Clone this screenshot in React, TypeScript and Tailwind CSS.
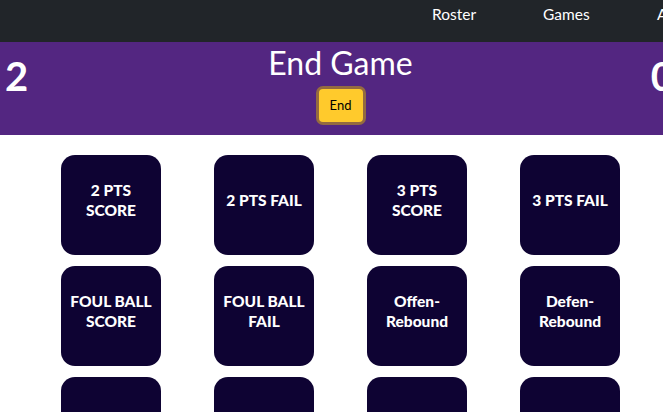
const actions = [
  ["2 PTS", "SCORE"],
  ["2 PTS FAIL"],
  ["3 PTS", "SCORE"],
  ["3 PTS FAIL"],
  ["FOUL BALL", "SCORE"],
  ["FOUL BALL", "FAIL"],
  ["Offen-", "Rebound"],
  ["Defen-", "Rebound"],
  [""],
  [""],
  [""],
  [""],
];

export default function App() {
  return (
    <div
      className="w-[663px] h-[412px] overflow-hidden bg-white"
      style={{ fontFamily: "Lato, 'Noto Sans', sans-serif" }}
    >
      <div className="w-[681px]">
        <nav className="h-[42px] bg-[#212529] flex items-center text-white text-[15.5px]">
          <div className="flex pl-[432px] pb-[12px]">
            <span className="w-[111px]">Roster</span>
            <span className="w-[114px]">Games</span>
            <span>About</span>
          </div>
        </nav>
        <div className="h-[93px] bg-[#532681] flex justify-between items-start text-white px-[5px]">
          <span className="font-bold text-[40px] mt-[14px] leading-none w-[60px]">2</span>
          <div className="flex flex-col items-center">
            <h1 className="text-[32px] leading-none mt-[5px]">End Game</h1>
            <button className="mt-[7px] h-[39px] w-[50px] rounded-[7px] border-[3px] border-[#946a40] bg-[#ffca2c] text-black text-[13px]">
              End
            </button>
          </div>
          <span className="font-bold text-[40px] mt-[14px] leading-none w-[60px] text-right pr-[2px]">0</span>
        </div>
        <div className="grid grid-cols-[repeat(4,100px)] gap-x-[53px] gap-y-[11px] pl-[61px] pt-[20px]">
          {actions.map((lines, i) => (
            <button
              key={i}
              className="h-[100px] w-[100px] rounded-[14px] bg-[#0e0333] text-white font-black text-[15.5px] leading-[20px] flex flex-col items-center justify-center pb-[10px] whitespace-nowrap"
            >
              {lines.map((l, j) => (
                <span key={j}>{l}</span>
              ))}
            </button>
          ))}
        </div>
      </div>
    </div>
  );
}
